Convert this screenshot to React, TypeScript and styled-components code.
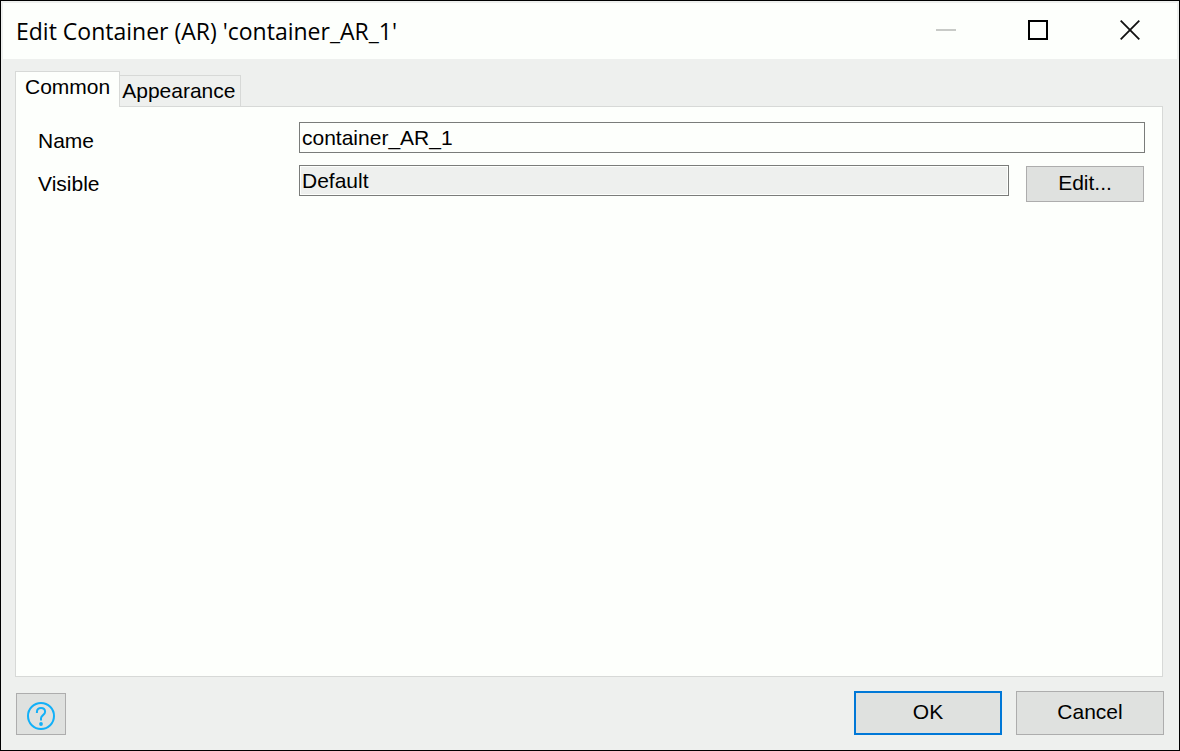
import React, { useState } from "react";
import styled, { createGlobalStyle, css } from "styled-components";

const paper = "#fdfffc";
const face = "#eef0ee";
const line = "#d7d9d7";

const GlobalStyle = createGlobalStyle`
  *, *::before, *::after { box-sizing: border-box; }
  body { margin: 0; background: ${face}; }
  button, input { font: inherit; color: inherit; }
`;

const Dialog = styled.main`
  display: flex;
  flex-direction: column;
  min-height: 100vh;
  padding: 2px;
  border: 1px solid #000;
  background: ${face};
  color: #000;
  font-family: "Liberation Sans", Arial, sans-serif;
  font-size: 21px;
  line-height: 24px;
`;

const TitleBar = styled.header`
  display: flex;
  align-items: center;
  justify-content: space-between;
  height: 56px;
  padding: 0 1px 0 13px;
  background: ${paper};
`;

const Title = styled.h1`
  margin: 0;
  font: 400 23px/30px "Open Sans", "Noto Sans", sans-serif;
`;

const WindowControls = styled.div`
  display: flex;
  align-self: flex-start;
`;

const WindowButton = styled.button`
  display: flex;
  align-items: center;
  justify-content: center;
  width: 92px;
  height: 54px;
  padding: 0;
  border: 0;
  background: transparent;
`;

const Body = styled.div`
  display: flex;
  flex: 1;
  flex-direction: column;
  padding: 12px 14px 0 12px;
`;

const TabList = styled.div`
  display: flex;
  align-items: flex-end;
`;

const Tab = styled.button<{ $active: boolean }>`
  position: relative;
  padding: 0 5px 0 2px;
  height: 32px;
  border: 1px solid ${line};
  background: ${face};
  ${(p) =>
    p.$active
      ? css`
          height: 36px;
          padding: 0 9px 5px;
          border-bottom: 0;
          background: ${paper};
          z-index: 1;
        `
      : css`
          border-left: 0;
        `}
`;

const Panel = styled.section`
  flex: 1;
  margin-top: -1px;
  padding: 15px 17px 15px 22px;
  border: 1px solid ${line};
  background: ${paper};
`;

const Row = styled.div`
  display: flex;
  align-items: flex-start;
  min-height: 43px;
`;

const Label = styled.label`
  flex: none;
  width: 261px;
  padding-top: 7px;
`;

const TextField = styled.input`
  flex: 1;
  min-width: 0;
  height: 31px;
  padding: 0 2px;
  border: 1px solid #7a7c7a;
  border-radius: 0;
  outline: none;
  background: ${paper};
  &:read-only {
    background: ${face};
    box-shadow: inset 0 0 0 1px ${paper};
  }
`;

const PushButton = styled.button<{ $primary?: boolean }>`
  display: flex;
  align-items: center;
  justify-content: center;
  width: 148px;
  height: 44px;
  padding: 0 0 2px;
  border: ${(p) => (p.$primary ? "2px solid #0078d7" : "1px solid #adadad")};
  background: #dfe1df;
`;

const EditButton = styled(PushButton)`
  width: 118px;
  height: 36px;
  margin: 1px 1px 0 17px;
`;

const HelpButton = styled(PushButton)`
  width: 50px;
  height: 42px;
  padding: 3px 0 0;
`;

const Footer = styled.footer`
  display: flex;
  align-items: flex-end;
  justify-content: space-between;
  padding: 14px 13px 13px;
`;

const Actions = styled.div`
  display: flex;
  gap: 14px;
`;

export default function App() {
  const [tab, setTab] = useState("Common");
  const [name, setName] = useState("container_AR_1");

  return (
    <Dialog>
      <GlobalStyle />
      <TitleBar>
        <Title>Edit Container (AR) 'container_AR_1'</Title>
        <WindowControls>
          <WindowButton aria-label="Minimize" disabled>
            <svg width="20" height="20" aria-hidden="true">
              <path d="M0 10H20" stroke="#c8cac7" strokeWidth="2" />
            </svg>
          </WindowButton>
          <WindowButton aria-label="Maximize">
            <svg width="20" height="20" aria-hidden="true">
              <rect x="1" y="1" width="18" height="18" fill="none" stroke="#000" strokeWidth="2" />
            </svg>
          </WindowButton>
          <WindowButton aria-label="Close">
            <svg width="20" height="20" aria-hidden="true">
              <path d="M.7 .7L19.3 19.3M19.3 .7L.7 19.3" stroke="#111" strokeWidth="1.8" />
            </svg>
          </WindowButton>
        </WindowControls>
      </TitleBar>
      <Body>
        <TabList role="tablist">
          {["Common", "Appearance"].map((t) => (
            <Tab key={t} role="tab" aria-selected={tab === t} $active={tab === t} onClick={() => setTab(t)}>
              {t}
            </Tab>
          ))}
        </TabList>
        <Panel role="tabpanel" aria-label={tab}>
          {tab === "Common" && (
            <>
              <Row>
                <Label htmlFor="name">Name</Label>
                <TextField id="name" value={name} onChange={(e) => setName(e.target.value)} />
              </Row>
              <Row>
                <Label htmlFor="visible">Visible</Label>
                <TextField id="visible" value="Default" readOnly />
                <EditButton>Edit...</EditButton>
              </Row>
            </>
          )}
        </Panel>
      </Body>
      <Footer>
        <HelpButton aria-label="Help">
          <svg width="28" height="28" viewBox="0 0 28 28" fill="none" stroke="#12b0f8" strokeWidth="2" aria-hidden="true">
            <circle cx="14" cy="14" r="13" />
            <path d="M9.9 11V10C9.9 7.4 11.6 6 14 6S18.1 7.5 18.1 9.8C18.1 13.2 14 13 14 16.2V18.6" />
            <circle cx="14" cy="22" r="1.9" fill="#12b0f8" stroke="none" />
          </svg>
        </HelpButton>
        <Actions>
          <PushButton $primary>OK</PushButton>
          <PushButton>Cancel</PushButton>
        </Actions>
      </Footer>
    </Dialog>
  );
}
